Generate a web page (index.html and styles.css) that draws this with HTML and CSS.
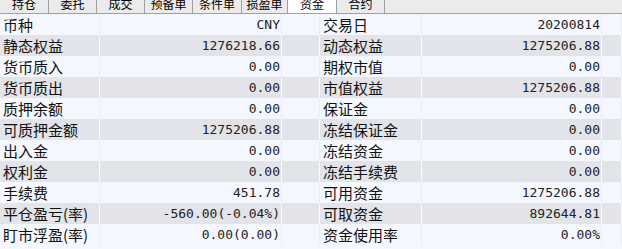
FILE: index.html
```html
<!DOCTYPE html>
<html lang="zh-CN">
<head>
  <meta charset="UTF-8" />
  <title>资金</title>
  <link rel="stylesheet" href="styles.css">
</head>
<body>

  <div class="tabs">
    <div class="tab" style="width:49px"><span>持仓</span></div>
    <div class="tab" style="width:48px"><span>委托</span></div>
    <div class="tab" style="width:48px"><span>成交</span></div>
    <div class="tab" style="width:48px"><span>预备单</span></div>
    <div class="tab" style="width:49px"><span>条件单</span></div>
    <div class="tab" style="width:46px"><span>损盈单</span></div>
    <div class="tab active" style="width:49px"><span>资金</span></div>
    <div class="tab" style="width:48px"><span>合约</span></div>
  </div>

  <div class="table">
    <div class="row">
      <div class="label">币种</div><div class="value">CNY</div><div class="gap"></div>
      <div class="label">交易日</div><div class="value">20200814</div><div class="gap"></div>
    </div>
    <div class="row">
      <div class="label">静态权益</div><div class="value">1276218.66</div><div class="gap"></div>
      <div class="label">动态权益</div><div class="value">1275206.88</div><div class="gap"></div>
    </div>
    <div class="row">
      <div class="label">货币质入</div><div class="value">0.00</div><div class="gap"></div>
      <div class="label">期权市值</div><div class="value">0.00</div><div class="gap"></div>
    </div>
    <div class="row">
      <div class="label">货币质出</div><div class="value">0.00</div><div class="gap"></div>
      <div class="label">市值权益</div><div class="value">1275206.88</div><div class="gap"></div>
    </div>
    <div class="row">
      <div class="label">质押余额</div><div class="value">0.00</div><div class="gap"></div>
      <div class="label">保证金</div><div class="value">0.00</div><div class="gap"></div>
    </div>
    <div class="row">
      <div class="label">可质押金额</div><div class="value">1275206.88</div><div class="gap"></div>
      <div class="label">冻结保证金</div><div class="value">0.00</div><div class="gap"></div>
    </div>
    <div class="row">
      <div class="label">出入金</div><div class="value">0.00</div><div class="gap"></div>
      <div class="label">冻结资金</div><div class="value">0.00</div><div class="gap"></div>
    </div>
    <div class="row">
      <div class="label">权利金</div><div class="value">0.00</div><div class="gap"></div>
      <div class="label">冻结手续费</div><div class="value">0.00</div><div class="gap"></div>
    </div>
    <div class="row">
      <div class="label">手续费</div><div class="value">451.78</div><div class="gap"></div>
      <div class="label">可用资金</div><div class="value">1275206.88</div><div class="gap"></div>
    </div>
    <div class="row">
      <div class="label">平仓盈亏(率)</div><div class="value">-560.00(-0.04%)</div><div class="gap"></div>
      <div class="label">可取资金</div><div class="value">892644.81</div><div class="gap"></div>
    </div>
    <div class="row">
      <div class="label">盯市浮盈(率)</div><div class="value">0.00(0.00)</div><div class="gap"></div>
      <div class="label">资金使用率</div><div class="value">0.00%</div><div class="gap"></div>
    </div>
  </div>

</body>
</html>
```

FILE: styles.css
```css
body {
  margin: 0;
  background: #f4f8fe;
  font-family: "Noto Sans CJK SC", "Noto Sans", sans-serif;
  color: #000;
  overflow: hidden;
}

.tabs {
  display: flex;
  height: 13px;
  background: #ebebeb;
  border-bottom: 1px solid #a0a0a0;
  overflow: hidden;
}

.tab {
  height: 13px;
  border-right: 1px solid #a0a0a0;
  box-sizing: border-box;
  text-align: center;
  font-size: 12px;
  line-height: 12px;
  color: #000;
  overflow: hidden;
}

.tab span {
  display: block;
  margin-top: -2px;
}

.tab.active {
  background: #fff;
}

.row {
  display: grid;
  grid-template-columns: 100px 182px 38px 102px 180px 1fr;
  height: 21px;
  background: #f4f8fe;
}

.row:nth-child(even) {
  background: #e2e4e9;
}

.row > div {
  border-right: 1px solid #fbfcfe;
  line-height: 21px;
  white-space: nowrap;
  overflow: hidden;
}

.row:nth-child(odd) > div {
  border-right-color: #e9eef5;
}

.label {
  font-size: 15px;
  padding-left: 3px;
  color: #111;
}

.value {
  font-family: "DejaVu Sans Mono", "Liberation Mono", monospace;
  font-size: 13px;
  text-align: right;
  padding-right: 1px;
  color: #222;
}
```
